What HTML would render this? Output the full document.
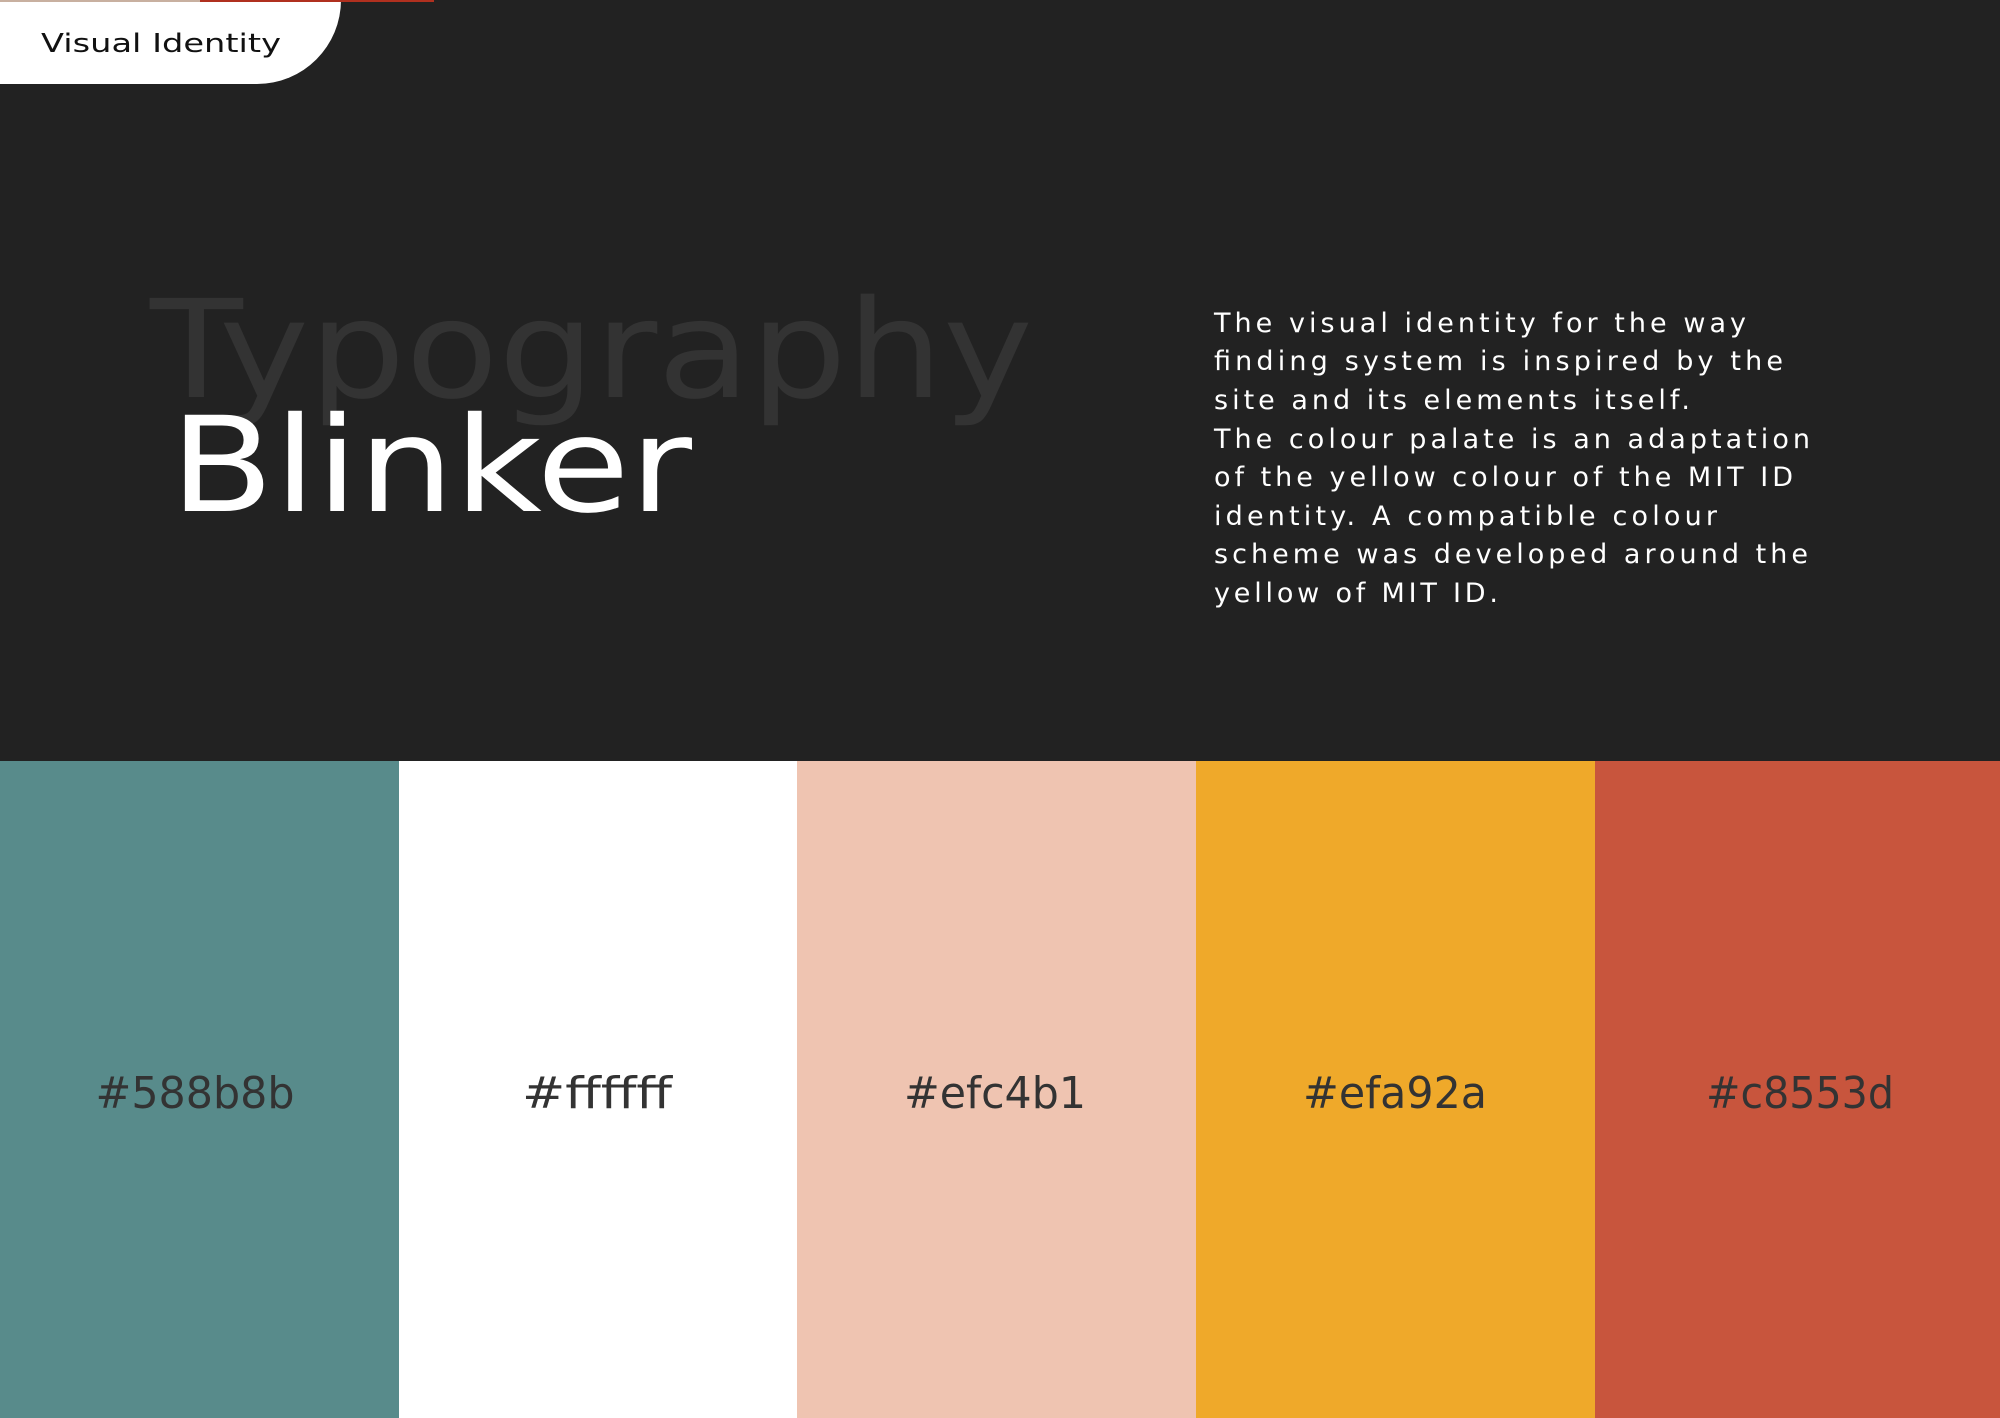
<!DOCTYPE html>
<html><head><meta charset="utf-8"><style>
html,body{margin:0;padding:0;background:#222;width:2000px;height:1418px;overflow:hidden}
svg{display:block}
text{font-family:"DejaVu Sans","Liberation Sans",sans-serif}
</style></head><body>
<svg width="2000" height="1418" viewBox="0 0 2000 1418" xmlns="http://www.w3.org/2000/svg">
<rect width="2000" height="1418" fill="#222222"/>
<path d="M0 0 H341 V0 A84 84 0 0 1 257 84 H0 Z" fill="#ffffff"/>
<rect x="0" y="0" width="434" height="2" fill="#b0301f"/>
<rect x="0" y="0" width="200" height="2" fill="#c8b0a0"/>
<text x="41" y="52" font-size="26" fill="#111" textLength="240" lengthAdjust="spacingAndGlyphs">Visual Identity</text>
<text x="150" y="397" font-size="136" fill="#333333" textLength="883" lengthAdjust="spacingAndGlyphs">Typography</text>
<text x="170" y="511" font-size="132" fill="#ffffff" textLength="522" lengthAdjust="spacingAndGlyphs">Blinker</text>
<g font-size="27" fill="#ffffff">
<text x="1214" y="332" textLength="532" lengthAdjust="spacing">The visual identity for the way</text>
<text x="1214" y="370" textLength="569" lengthAdjust="spacing">finding system is inspired by the</text>
<text x="1214" y="409" textLength="476" lengthAdjust="spacing">site and its elements itself.</text>
<text x="1214" y="448" textLength="596" lengthAdjust="spacing">The colour palate is an adaptation</text>
<text x="1214" y="486" textLength="579" lengthAdjust="spacing">of the yellow colour of the MIT ID</text>
<text x="1214" y="525" textLength="503" lengthAdjust="spacing">identity. A compatible colour</text>
<text x="1214" y="563" textLength="594" lengthAdjust="spacing">scheme was developed around the</text>
<text x="1214" y="602" textLength="284" lengthAdjust="spacing">yellow of MIT ID.</text>
</g>
<rect x="0" y="761" width="399" height="657" fill="#588b8b"/>
<rect x="399" y="761" width="399" height="657" fill="#ffffff"/>
<rect x="797" y="761" width="399" height="657" fill="#efc4b1"/>
<rect x="1196" y="761" width="400" height="657" fill="#efa92a"/>
<rect x="1595" y="761" width="405" height="657" fill="#c8553d"/>
<g font-size="44" fill="#333333" text-anchor="middle">
<text x="195" y="1108" textLength="199" lengthAdjust="spacingAndGlyphs">#588b8b</text>
<text x="597" y="1108" textLength="150" lengthAdjust="spacingAndGlyphs">#ffffff</text>
<text x="995" y="1108" textLength="182" lengthAdjust="spacingAndGlyphs">#efc4b1</text>
<text x="1395" y="1108" textLength="184" lengthAdjust="spacingAndGlyphs">#efa92a</text>
<text x="1800" y="1108" textLength="188" lengthAdjust="spacingAndGlyphs">#c8553d</text>
</g>
</svg>
</body></html>
